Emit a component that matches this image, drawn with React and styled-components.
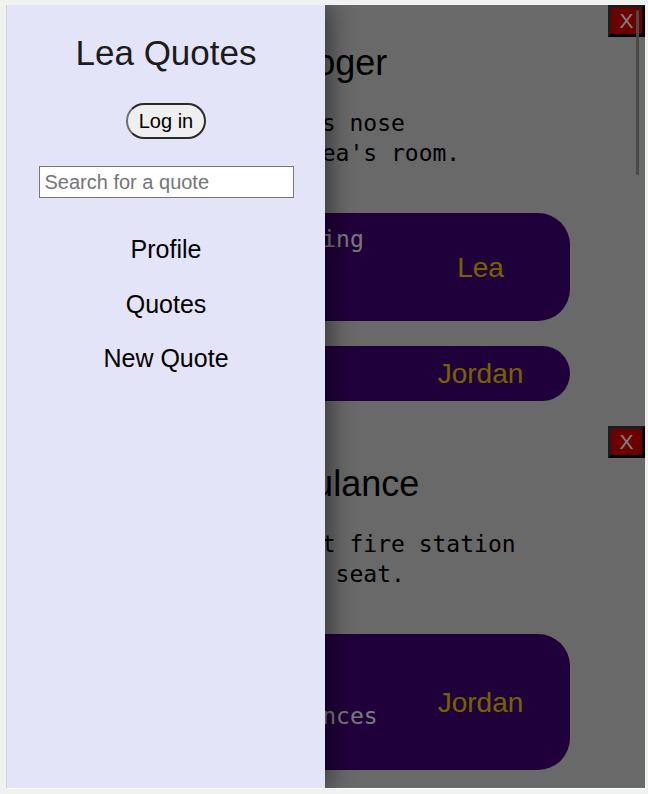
import React from 'react';
import styled, { createGlobalStyle } from 'styled-components';

const Global = createGlobalStyle`
  html, body { margin: 0; padding: 0; background: #f0f2f1; }
  body { font-family: "Liberation Sans", Arial, sans-serif; }
  * { box-sizing: border-box; }
`;

const Page = styled.div`
  padding: 5px 3px 5px 6px;
  height: 794px;
`;

const Frame = styled.div`
  position: relative;
  height: 784px;
  border-left: 1px solid #d2d2d2;
  border-bottom: 1px solid #ffffff;
  overflow: hidden;
  background: #d3d3d3;
`;

const Main = styled.main`
  height: 100%;
  overflow: hidden;
`;

const Card = styled.section`
  position: relative;
  padding: 0 75px 25px 37px;
  display: flex;
  flex-direction: column;
  gap: 25px;
`;

const CloseButton = styled.button`
  position: absolute;
  top: 0;
  right: 0;
  width: 37px;
  height: 32px;
  padding: 0;
  background: #d80000;
  border: 3px outset #3a3a3a;
  color: #ffffff;
  font-family: "Liberation Sans", Arial, sans-serif;
  font-size: 21px;
  line-height: 24px;
`;

const Title = styled.h2`
  margin: 37px 0 0;
  padding-left: 29px;
  font-size: 36px;
  font-weight: 400;
  line-height: 42px;
  color: #000;
  white-space: nowrap;
`;

const QuoteText = styled.p`
  margin: -1px 0 20px;
  padding-left: 28.5px;
  font-family: "DejaVu Sans Mono", monospace;
  font-size: 23px;
  line-height: 30px;
  color: #000;
  white-space: pre;
`;

const Bubble = styled.div`
  display: flex;
  align-items: center;
  background: #400074;
  border-radius: 32px;
  padding: 12px 30px 12px 29px;
`;

const Lines = styled.div`
  flex: 1;
  font-family: "DejaVu Sans Mono", monospace;
  font-size: 23px;
  line-height: 28px;
  color: #f2f2f2;
  white-space: pre;
`;

const Speaker = styled.div`
  width: 119px;
  text-align: center;
  font-size: 28px;
  line-height: 31px;
  color: #eec400;
`;

const Thumb = styled.div`
  position: absolute;
  top: 5px;
  right: 6px;
  width: 3px;
  height: 165px;
  border-radius: 2px;
  background: #959595;
`;

const Backdrop = styled.div`
  position: absolute;
  inset: 0;
  background: rgba(0, 0, 0, 0.5);
  z-index: 5;
`;

const Drawer = styled.aside`
  position: absolute;
  top: 0;
  left: 0;
  bottom: 0;
  width: 318px;
  z-index: 6;
  background: #e4e4f8;
  box-shadow: 6px 0 22px rgba(0, 0, 0, 0.45);
  display: flex;
  flex-direction: column;
  align-items: center;
  padding-top: 28px;
`;

const Brand = styled.h1`
  margin: 0 0 30px;
  font-size: 35px;
  font-weight: 400;
  line-height: 40px;
  color: #1c1c1c;
`;

const LoginButton = styled.button`
  height: 36px;
  padding: 0 11px;
  border-radius: 18px;
  border: 2px solid #2a2a2a;
  border-left-color: #707070;
  background: #efefef;
  font-family: "Liberation Sans", Arial, sans-serif;
  font-size: 20px;
  color: #000;
`;

const Search = styled.input`
  margin-top: 27px;
  width: 255px;
  height: 32px;
  padding: 0 5px;
  border: 1px solid #767676;
  background: #fff;
  font-family: "Liberation Sans", Arial, sans-serif;
  font-size: 20px;
  &::placeholder { color: #757575; }
`;

const Nav = styled.nav`
  margin-top: 36px;
  display: flex;
  flex-direction: column;
  align-items: center;
  gap: 24.5px;
`;

const NavLink = styled.a`
  font-size: 25px;
  line-height: 30px;
  color: #000;
  text-decoration: none;
`;

const quotes = [
  {
    title: 'The Pea and Roger',
    text: "Pea went up Roger's nose\nwhile he sits in Lea's room.",
    bubbles: [
      { lines: 'Roger, stop sniffling\nand come out of\nmy room!', who: 'Lea' },
      { lines: 'Okay, okay!', who: 'Jordan' },
    ],
  },
  {
    title: 'The Quiet Ambulance',
    text: 'We went to the next fire station\nLea took the front seat.',
    bubbles: [
      { lines: 'Lea, look at the\nfire trucks. And\nwe saw many ambulances\ntoday!', who: 'Jordan' },
    ],
  },
];

export default function App() {
  return (
    <>
      <Global />
      <Page>
        <Frame>
          <Main>
            {quotes.map((q) => (
              <Card key={q.title}>
                <CloseButton>X</CloseButton>
                <Title>{q.title}</Title>
                <QuoteText>{q.text}</QuoteText>
                {q.bubbles.map((b, i) => (
                  <Bubble key={i}>
                    <Lines>{b.lines}</Lines>
                    <Speaker>{b.who}</Speaker>
                  </Bubble>
                ))}
              </Card>
            ))}
          </Main>
          <Thumb />
          <Backdrop />
          <Drawer>
            <Brand>Lea Quotes</Brand>
            <LoginButton>Log in</LoginButton>
            <Search placeholder="Search for a quote" />
            <Nav>
              <NavLink href="#">Profile</NavLink>
              <NavLink href="#">Quotes</NavLink>
              <NavLink href="#">New Quote</NavLink>
            </Nav>
          </Drawer>
        </Frame>
      </Page>
    </>
  );
}
